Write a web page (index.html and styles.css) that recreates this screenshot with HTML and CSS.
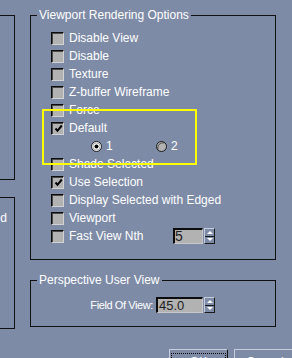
FILE: index.html
```html
<!DOCTYPE html>
<html lang="en">
<head>
  <meta charset="UTF-8" />
  <title>Viewport Configuration</title>
  <link rel="stylesheet" href="styles.css">
</head>
<body>

  <div class="dialog">
    <div class="side">
      <div class="side-box first"></div>
      <div class="side-box second"><span>Advanced</span></div>
    </div>

    <div class="main">
      <div class="group viewport">
        <span class="group-title">Viewport Rendering Options</span>
        <div class="highlight"></div>

        <div class="row"><span class="check"></span><span class="label">Disable View</span></div>
        <div class="row"><span class="check"></span><span class="label">Disable</span></div>
        <div class="row"><span class="check"></span><span class="label">Texture</span></div>
        <div class="row"><span class="check"></span><span class="label">Z-buffer Wireframe</span></div>
        <div class="row"><span class="check"></span><span class="label">Force</span></div>
        <div class="row">
          <span class="check checked">
            <svg width="9" height="9" viewBox="0 0 9 9"><path d="M1.5 4.5 L3.5 6.8 L7.8 1.5" fill="none" stroke="#000" stroke-width="2"/></svg>
          </span>
          <span class="label">Default</span>
        </div>
        <div class="row radios">
          <div class="option">
            <svg width="11" height="11" viewBox="0 0 11 11"><circle cx="5.5" cy="5.5" r="5" fill="#fff" stroke="#1a1a1a"/><circle cx="5.5" cy="5.5" r="3.6" fill="none" stroke="#9a9a9a" stroke-width="0.8"/><circle cx="5.5" cy="5.5" r="2" fill="#000"/></svg>
            <span class="label">1</span>
          </div>
          <div class="option">
            <svg width="11" height="11" viewBox="0 0 11 11"><circle cx="5.5" cy="5.5" r="5" fill="#b2b2b2" stroke="#1a1a1a"/><path d="M2 8 A5 5 0 0 1 8 2" fill="none" stroke="#444" stroke-width="1"/></svg>
            <span class="label">2</span>
          </div>
        </div>
        <div class="row"><span class="check"></span><span class="label">Shade Selected</span></div>
        <div class="row">
          <span class="check checked">
            <svg width="9" height="9" viewBox="0 0 9 9"><path d="M1.5 4.5 L3.5 6.8 L7.8 1.5" fill="none" stroke="#000" stroke-width="2"/></svg>
          </span>
          <span class="label">Use Selection</span>
        </div>
        <div class="row"><span class="check"></span><span class="label">Display Selected with Edged</span></div>
        <div class="row"><span class="check"></span><span class="label">Viewport</span></div>
        <div class="row">
          <span class="check"></span><span class="label nth">Fast View Nth</span>
          <div class="field small"><span>5</span></div>
          <div class="spin"><span class="up"></span><span class="down"></span></div>
        </div>
      </div>

      <div class="group perspective">
        <span class="group-title">Perspective User View</span>
        <div class="fov-row">
          <span class="fov-label">Field Of View:</span>
          <div class="field wide"><span>45.0</span></div>
          <div class="spin"><span class="up"></span><span class="down"></span></div>
        </div>
      </div>

      <div class="buttons">
        <button class="btn default"><span class="focus">OK</span></button>
        <button class="btn">Cancel</button>
      </div>
    </div>
  </div>

</body>
</html>
```

FILE: styles.css
```css
* {
  box-sizing: border-box;
}

html, body {
  margin: 0;
  height: 358px;
  overflow: hidden;
}

body {
  background: #7d8ba6;
  color: #fff;
  font-family: 'Liberation Sans', Arial, sans-serif;
  font-size: 12px;
}

.dialog {
  display: flex;
  align-items: flex-start;
}

/* partially visible panels on the left */
.side {
  width: 15px;
  display: flex;
  flex-direction: column;
}

.side-box {
  border: 1px solid #111;
  border-left: none;
}

.side-box.first {
  margin-top: 15px;
  height: 165px;
}

.side-box.second {
  margin-top: 17px;
  height: 132px;
  display: flex;
  justify-content: flex-end;
  padding: 13px 7px 0 0;
  line-height: 14px;
  white-space: nowrap;
}

.main {
  margin-left: 15px;
  width: 246px;
}

.group {
  position: relative;
  border: 1px solid #111;
}

.group-title {
  position: absolute;
  top: -8px;
  left: 6px;
  padding: 0 2px;
  line-height: 14px;
  background: #7d8ba6;
  white-space: nowrap;
}

.viewport {
  margin-top: 15px;
  padding: 13px 0 14px 20px;
}

.highlight {
  position: absolute;
  left: 11px;
  top: 93px;
  width: 155px;
  height: 56px;
  border: 2px solid #ffff00;
  pointer-events: none;
}

.row {
  height: 18px;
  display: flex;
  align-items: center;
  white-space: nowrap;
}

.check {
  width: 13px;
  height: 13px;
  flex: none;
  margin-right: 5px;
  border: 1px solid;
  border-color: #0c0c0c #d2d2d2 #d2d2d2 #0c0c0c;
  box-shadow: inset 1px 1px 0 #4a4a4a;
  background: #b2b2b2;
  display: flex;
  align-items: center;
  justify-content: center;
}

.check svg {
  margin: 1px 0 0 1px;
}

.label {
  line-height: 18px;
}

.label.nth {
  width: 104px;
}

.radios {
  padding-left: 40px;
}

.option {
  width: 65px;
  display: flex;
  align-items: center;
  gap: 4px;
}

.field {
  height: 16px;
  border: 2px solid;
  border-color: #0c0c0c #c8c8c8 #c8c8c8 #0c0c0c;
  border-width: 2px 1px 1px 2px;
  background: #b2b2b2;
  color: #1e1e1e;
  font-size: 14px;
  line-height: 13px;
  overflow: hidden;
}

.field.small {
  width: 30px;
  padding-left: 0;
}

.field.wide {
  width: 47px;
  padding-left: 1px;
  font-size: 13px;
}

.spin {
  width: 11px;
  height: 16px;
  margin-left: 1px;
  border: 1px solid;
  border-color: #c6cddc #1a1a1a #1a1a1a #c6cddc;
  display: flex;
  flex-direction: column;
}

.spin span {
  flex: 1;
  display: flex;
  align-items: center;
  justify-content: center;
}

.spin .up {
  border-bottom: 1px solid #1a1a1a;
}

.spin .up::after,
.spin .down::after {
  content: "";
  border-left: 3px solid transparent;
  border-right: 3px solid transparent;
}

.spin .up::after {
  border-bottom: 3px solid #fff;
}

.spin .down::after {
  border-top: 3px solid #fff;
}

.perspective {
  margin-top: 20px;
  padding: 16px 0 13px 0;
}

.fov-row {
  display: flex;
  align-items: center;
  height: 16px;
}

.fov-label {
  width: 122px;
  margin-right: 3px;
  text-align: right;
  font-size: 11px;
  letter-spacing: -0.4px;
  white-space: nowrap;
}

.buttons {
  margin-top: 22px;
  padding-left: 139px;
  display: flex;
  gap: 6px;
}

.btn {
  width: 59px;
  height: 22px;
  padding: 2px 2px 0;
  border: 1px solid;
  border-color: #c6cddc #111 #111 #c6cddc;
  background: #7d8ba6;
  color: #fff;
  font-family: 'Liberation Sans', Arial, sans-serif;
  font-size: 12px;
  flex: none;
}

.btn + .btn {
  width: 62px;
  padding-top: 3px;
}

.focus {
  display: block;
  outline: 1px dotted #000;
  padding-top: 1px;
}
```
